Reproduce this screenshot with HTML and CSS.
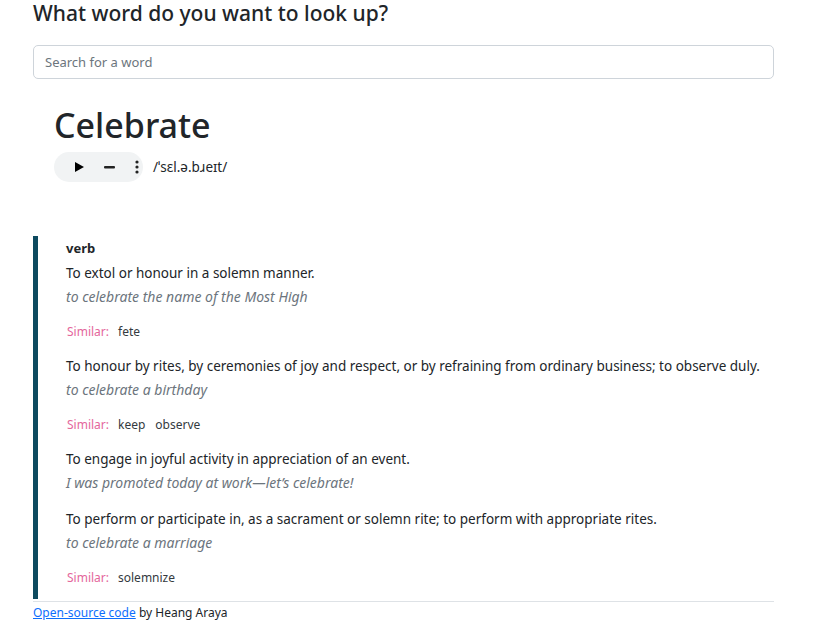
FILE: index.html
```html
<!DOCTYPE html>
<html lang="en">
<head>
<meta charset="utf-8">
<title>Dictionary</title>
<link rel="stylesheet" href="styles.css">
</head>
<body>
<div class="page">
  <h2 class="title">What word do you want to look up?</h2>
  <input class="search" type="text" placeholder="Search for a word">
  <section class="word">
    <h1 class="word-title">Celebrate</h1>
    <div class="phonetic-row">
      <div class="player">
        <svg class="ico" width="12" height="12" viewBox="0 0 12 12"><path d="M2 1 L11 6 L2 11 Z" fill="#000"/></svg>
        <svg class="ico" width="12" height="12" viewBox="0 0 12 12"><rect x="0" y="5" width="11" height="2.4" rx="1" fill="#222"/></svg>
        <svg class="ico" width="4" height="14" viewBox="0 0 4 14"><circle cx="2" cy="2" r="1.6" fill="#222"/><circle cx="2" cy="7" r="1.6" fill="#222"/><circle cx="2" cy="12" r="1.6" fill="#222"/></svg>
      </div>
      <span class="phonetic">/ˈsɛl.ə.bɹeɪt/</span>
    </div>
  </section>
  <section class="meaning">
    <div class="pos">verb</div>
    <div class="def">
      <p class="def-text">To extol or honour in a solemn manner.</p>
      <p class="example">to celebrate the name of the Most High</p>
      <div class="similar"><span class="sim-label">Similar:</span><span class="sim-word">fete</span></div>
    </div>
    <div class="def">
      <p class="def-text">To honour by rites, by ceremonies of joy and respect, or by refraining from ordinary business; to observe duly.</p>
      <p class="example">to celebrate a birthday</p>
      <div class="similar"><span class="sim-label">Similar:</span><span class="sim-word">keep</span><span class="sim-word">observe</span></div>
    </div>
    <div class="def">
      <p class="def-text">To engage in joyful activity in appreciation of an event.</p>
      <p class="example gap">I was promoted today at work—let’s celebrate!</p>
    </div>
    <div class="def">
      <p class="def-text">To perform or participate in, as a sacrament or solemn rite; to perform with appropriate rites.</p>
      <p class="example">to celebrate a marriage</p>
      <div class="similar last"><span class="sim-label">Similar:</span><span class="sim-word">solemnize</span></div>
    </div>
  </section>
  <footer class="footer"><a class="link" href="#">Open-source code</a> by Heang Araya</footer>
</div>
</body>
</html>
```
FILE: styles.css
```css
* { box-sizing: border-box; }
html, body { margin: 0; padding: 0; background: #fff; }
body {
  font-family: "Noto Sans", "Open Sans", sans-serif;
  color: #212529;
}
.page {
  width: 741px;
  margin-left: 33px;
}
.title {
  margin: 0;
  font-size: 21px;
  font-weight: 500;
  line-height: 26px;
}
.search {
  display: block;
  width: 100%;
  height: 34px;
  margin-top: 19px;
  padding: 0 11px;
  border: 1px solid #ced4da;
  border-radius: 5px;
  font-family: inherit;
  font-size: 13px;
  color: #495057;
  outline: none;
}
.search::placeholder { color: #6c757d; }
.word {
  padding-left: 21px;
  padding-top: 25px;
}
.word-title {
  margin: 0;
  font-size: 34px;
  font-weight: 500;
  line-height: 42px;
}
.phonetic-row {
  display: flex;
  align-items: center;
  gap: 10px;
  margin-top: 6px;
}
.player {
  width: 89px;
  height: 30px;
  border-radius: 15px;
  background: #f1f3f4;
  display: flex;
  align-items: center;
  padding-left: 19px;
  gap: 19px;
}
.ico { display: block; }
.phonetic { font-size: 13.5px; }
.meaning {
  margin-top: 54px;
  border-left: 5px solid #0d4a5f;
  padding: 2px 0 10px 28px;
}
.pos {
  font-size: 13px;
  font-weight: 700;
  line-height: 20px;
  margin-bottom: 4px;
}
.def-text, .example { margin: 0; font-size: 13.5px; line-height: 23px; }
.example { font-size: 14px; font-style: italic; color: #6c757d; margin-bottom: 12px; }
.example.gap { margin-bottom: 14px; }
.similar { font-size: 12px; line-height: 23px; margin-bottom: 12px; padding-left: 1px; }
.similar.last { margin-bottom: 0; }
.sim-label { color: #e4679c; margin-right: 9px; }
.sim-word { margin-right: 10px; color: #343a40; }
.footer {
  border-top: 1px solid #dee2e6;
  margin-top: 2px;
  padding-top: 2px;
  font-size: 12px;
  line-height: 18px;
}
.link { color: #0d6efd; text-decoration: underline; }
```
